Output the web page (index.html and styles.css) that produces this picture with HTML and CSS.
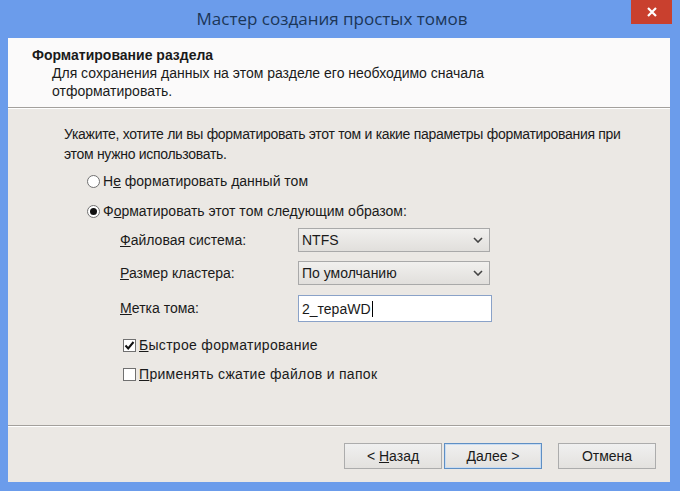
FILE: index.html
```html
<!DOCTYPE html>
<html>
<head>
    <title>Мастер создания простых томов</title>
    <link rel="stylesheet" href="styles.css">
</head>
<body>
    <div class="window">
        <div class="titlebar">
            <span class="title">Мастер создания простых томов</span>
            <div class="close-btn">
                <svg viewBox="0 0 12 12" width="12" height="12">
                    <path d="M2,2 L10,10 M10,2 L2,10" stroke="#fff" stroke-width="2.2" />
                </svg>
            </div>
        </div>

        <div class="client">
            <div class="header">
                <div class="header-title">Форматирование раздела</div>
                <div class="header-desc">Для сохранения данных на этом разделе его необходимо сначала<br>отформатировать.</div>
            </div>

            <div class="content">
                <p class="intro">Укажите, хотите ли вы форматировать этот том и какие параметры форматирования при этом нужно использовать.</p>

                <div class="radio-row">
                    <span class="radio"></span>
                    <span>Н<u>е</u> форматировать данный том</span>
                </div>
                <div class="radio-row">
                    <span class="radio checked"><span class="dot"></span></span>
                    <span>Ф<u>о</u>рматировать этот том следующим образом:</span>
                </div>

                <div class="fields">
                    <div class="field-row">
                        <span class="field-label"><u>Ф</u>айловая система:</span>
                        <div class="combo">
                            <span>NTFS</span>
                            <svg viewBox="0 0 10 6" width="10" height="6">
                                <path d="M1,1 L5,5 L9,1" stroke="#444" stroke-width="1.6" fill="none" />
                            </svg>
                        </div>
                    </div>
                    <div class="field-row">
                        <span class="field-label"><u>Р</u>азмер кластера:</span>
                        <div class="combo">
                            <span>По умолчанию</span>
                            <svg viewBox="0 0 10 6" width="10" height="6">
                                <path d="M1,1 L5,5 L9,1" stroke="#444" stroke-width="1.6" fill="none" />
                            </svg>
                        </div>
                    </div>
                    <div class="field-row">
                        <span class="field-label"><u>М</u>етка тома:</span>
                        <div class="textbox">2_тераWD<span class="caret"></span></div>
                    </div>
                </div>

                <div class="checks">
                    <div class="check-row">
                        <span class="checkbox">
                            <svg viewBox="0 0 13 13" width="13" height="13">
                                <path d="M2.5,6.5 L5.2,9.5 L10.5,3" stroke="#111" stroke-width="2" fill="none" />
                            </svg>
                        </span>
                        <span><u>Б</u>ыстрое форматирование</span>
                    </div>
                    <div class="check-row">
                        <span class="checkbox"></span>
                        <span><u>П</u>рименять сжатие файлов и папок</span>
                    </div>
                </div>
            </div>

            <div class="footer">
                <div class="btn-group">
                    <div class="btn"><span>&lt;&nbsp;<u>Н</u>азад</span></div>
                    <div class="btn default"><span><u>Д</u>алее&nbsp;&gt;</span></div>
                </div>
                <div class="btn">Отмена</div>
            </div>
        </div>
    </div>
</body>
</html>
```

FILE: styles.css
```css
body {
    margin: 0;
    width: 680px;
    height: 491px;
    overflow: hidden;
    background: #6b9ceb;
    font-family: "Liberation Sans", Arial, sans-serif;
    font-size: 14px;
    color: #1a1a1a;
}

.window {
    display: flex;
    flex-direction: column;
    height: 491px;
}

/* Title bar */
.titlebar {
    position: relative;
    height: 38px;
    display: flex;
    align-items: center;
    justify-content: center;
}

.title {
    font-family: "Open Sans", sans-serif;
    font-size: 17px;
    color: #1b3658;
    margin-left: -16px;
    margin-top: -1px;
}

.close-btn {
    position: absolute;
    top: 0;
    left: 631px;
    width: 41px;
    height: 24px;
    background: #c9402e;
    display: flex;
    align-items: center;
    justify-content: center;
}

/* Client area */
.client {
    margin: 0 10px 0 8px;
    height: 444px;
    display: flex;
    flex-direction: column;
    background: #ebe8e4;
}

.header {
    height: 70px;
    box-sizing: border-box;
    background: #fbfafa;
    border-bottom: 1px solid #a3a09c;
    box-shadow: 0 1px 0 #fff;
    padding: 8px 0 0 24px;
    line-height: 18px;
}

.header-title {
    font-weight: bold;
}

.header-desc {
    padding-left: 20px;
}

.content {
    flex: 1;
    padding: 16px 0 0 56px;
}

.intro {
    margin: 0;
    line-height: 20px;
    width: 580px;
    letter-spacing: -0.3px;
}

.radio-row {
    display: flex;
    align-items: center;
    height: 20px;
    margin-top: 10px;
    margin-left: 23px;
    gap: 3px;
}

.radio-row:first-of-type {
    margin-top: 7px;
}

.radio {
    width: 13px;
    height: 13px;
    box-sizing: border-box;
    border: 1px solid #707070;
    border-radius: 50%;
    background: #fff;
    display: flex;
    align-items: center;
    justify-content: center;
}

.radio .dot {
    width: 7px;
    height: 7px;
    border-radius: 50%;
    background: #111;
}

.fields {
    margin-top: 7px;
    margin-left: 56px;
    display: flex;
    flex-direction: column;
    gap: 9px;
}

.field-row {
    display: flex;
    align-items: center;
}

.field-label {
    width: 178px;
}

.combo {
    width: 192px;
    height: 24px;
    box-sizing: border-box;
    border: 1px solid #a9a9a9;
    background: linear-gradient(#f1f0ee, #e1dfdc);
    display: flex;
    align-items: center;
    justify-content: space-between;
    padding: 0 6px 0 3px;
}

.textbox {
    width: 194px;
    height: 27px;
    box-sizing: border-box;
    border: 1px solid #8aa2c8;
    background: #fff;
    display: flex;
    align-items: center;
    padding-left: 3px;
    margin-top: 1px;
}

.caret {
    width: 1px;
    height: 16px;
    background: #000;
    margin-left: 1px;
}

.checks {
    margin-top: 13px;
    margin-left: 59px;
}

.check-row {
    display: flex;
    align-items: center;
    gap: 3px;
    height: 20px;
    margin-bottom: 9px;
    letter-spacing: 0.3px;
}

.checkbox {
    width: 13px;
    height: 13px;
    box-sizing: border-box;
    border: 1px solid #707070;
    background: #fff;
    display: flex;
    align-items: center;
    justify-content: center;
}

.checkbox svg {
    flex-shrink: 0;
}

/* Footer with buttons */
.footer {
    height: 57px;
    box-sizing: border-box;
    border-top: 1px solid #a3a09c;
    box-shadow: inset 0 1px 0 #fff;
    display: flex;
    justify-content: flex-end;
    gap: 16px;
    padding: 17px 14px 0 0;
}

.btn-group {
    display: flex;
    gap: 2px;
}

.btn {
    width: 98px;
    height: 26px;
    box-sizing: border-box;
    border: 1px solid #acacac;
    background: linear-gradient(#f0f0f0, #e3e1de);
    display: flex;
    align-items: center;
    justify-content: center;
}

.btn.default {
    border-color: #5f8fc4;
    box-shadow: inset 0 0 0 1px #c8dcf2;
}
```
